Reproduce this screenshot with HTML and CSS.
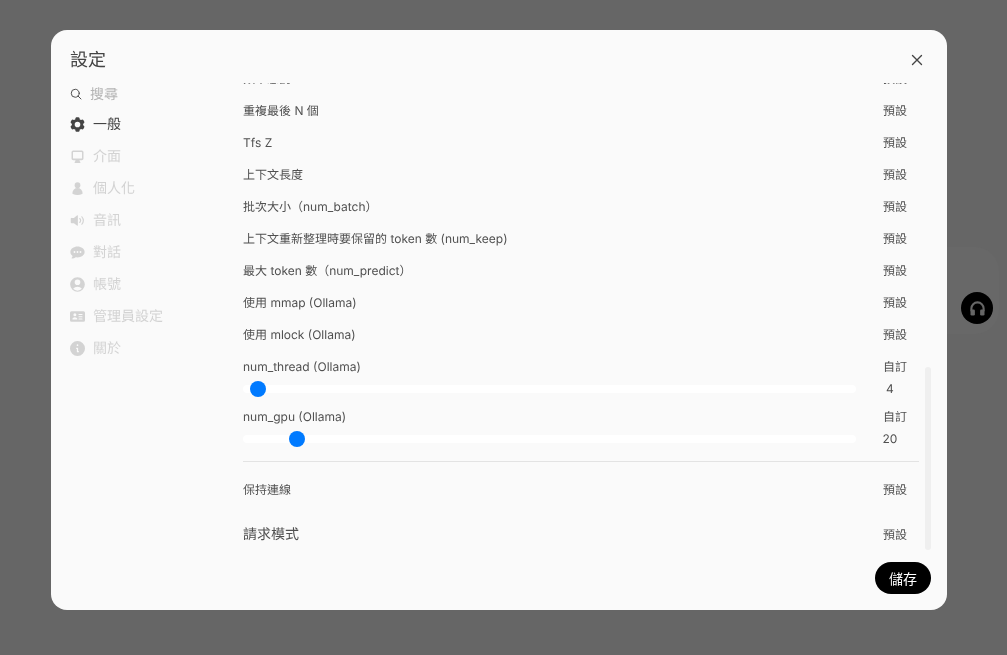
FILE: index.html
```html
<!DOCTYPE html>
<html lang="zh-TW">
<head>
  <meta charset="UTF-8">
  <title>設定</title>
  <meta name="viewport" content="width=device-width, initial-scale=1.0">
  <link rel="stylesheet" href="styles.css">
</head>
<body>
  <div class="overlay">
    <div class="modal">
      <div class="modal-header">
        <h2>設定</h2>
        <button class="close-button" aria-label="關閉">
          <svg viewBox="0 0 24 24" fill="none" stroke="currentColor" stroke-width="1.800" stroke-linecap="round"><path d="M6 18 18 6M6 6l12 12"/></svg>
        </button>
      </div>

      <div class="modal-body">
        <!-- Sidebar -->
        <nav class="sidebar">
          <div class="search-row">
            <svg class="icon" viewBox="0 0 24 24" fill="none" stroke="currentColor" stroke-width="2" stroke-linecap="round"><circle cx="10.500" cy="10.500" r="8"/><path d="m22 22-5.800-5.800"/></svg>
            <span>搜尋</span>
          </div>
          <div class="nav-item active">
            <svg class="icon" viewBox="2 2 20 20" fill="currentColor"><path fill-rule="evenodd" d="M11.078 2.25c-.917 0-1.699.663-1.85 1.567L9.05 4.889c-.02.12-.115.26-.297.348a7.493 7.493 0 0 0-.986.57c-.166.115-.334.126-.45.083L6.3 5.508a1.875 1.875 0 0 0-2.282.819l-.922 1.597a1.875 1.875 0 0 0 .432 2.385l.84.692c.095.078.17.229.154.43a7.598 7.598 0 0 0 0 1.139c.015.2-.059.352-.153.43l-.841.692a1.875 1.875 0 0 0-.432 2.385l.922 1.597a1.875 1.875 0 0 0 2.282.818l1.019-.382c.115-.043.283-.031.45.082.312.214.641.405.985.57.182.088.277.228.297.35l.178 1.071c.151.904.933 1.567 1.85 1.567h1.844c.916 0 1.699-.663 1.85-1.567l.178-1.072c.02-.12.114-.26.297-.349.344-.165.673-.356.985-.57.167-.114.335-.125.45-.082l1.02.382a1.875 1.875 0 0 0 2.28-.819l.923-1.597a1.875 1.875 0 0 0-.432-2.385l-.84-.692c-.095-.078-.17-.229-.154-.43a7.614 7.614 0 0 0 0-1.139c-.016-.2.059-.352.153-.43l.84-.692c.708-.582.891-1.59.433-2.385l-.922-1.597a1.875 1.875 0 0 0-2.282-.818l-1.02.382c-.114.043-.282.031-.449-.083a7.49 7.49 0 0 0-.985-.57c-.183-.087-.277-.227-.297-.348l-.179-1.072a1.875 1.875 0 0 0-1.85-1.567h-1.843ZM12 15.75a3.75 3.75 0 1 0 0-7.5 3.75 3.75 0 0 0 0 7.5Z"/></svg>
            <span>一般</span>
          </div>
          <div class="nav-item">
            <svg class="icon" viewBox="0 0 20 20" fill="currentColor"><path fill-rule="evenodd" d="M2 4.250A2.250 2.250 0 0 1 4.250 2h11.500A2.250 2.250 0 0 1 18 4.250v8.500A2.250 2.250 0 0 1 15.750 15h-3.100l.350 1.400.800.800a.750.750 0 0 1-.550 1.300H6.750a.750.750 0 0 1-.550-1.300l.800-.800.350-1.400h-3.100A2.250 2.250 0 0 1 2 12.750v-8.500Zm2 0v7.750c0 .410.340.750.750.750h10.500a.750.750 0 0 0 .750-.750V4.750a.750.750 0 0 0-.750-.750H4.750a.750.750 0 0 0-.750.250Z"/></svg>
            <span>介面</span>
          </div>
          <div class="nav-item">
            <svg class="icon" viewBox="0 0 20 20" fill="currentColor"><circle cx="10" cy="5.500" r="3.800"/><path d="M3.200 16.200a6.800 6.800 0 0 1 13.600 0c0 .500-.300.900-.700 1.100A13.600 13.600 0 0 1 10 18.600a13.600 13.600 0 0 1-6.100-1.300c-.400-.200-.700-.600-.700-1.100Z"/></svg>
            <span>個人化</span>
          </div>
          <div class="nav-item">
            <svg class="icon" viewBox="0 0 20 20" fill="currentColor"><path d="M10.500 3.750a.750.750 0 0 0-1.260-.550L5.200 6.500H2a1 1 0 0 0-1 .690V12.810a1 1 0 0 0 1 .690h3.200l4.040 3.300a.750.750 0 0 0 1.260-.550V3.750Z"/><path d="M13 7.300a4 4 0 0 1 0 5.400" fill="none" stroke="currentColor" stroke-width="1.500" stroke-linecap="round"/><path d="M15.800 5a8 8 0 0 1 0 10" fill="none" stroke="currentColor" stroke-width="1.500" stroke-linecap="round"/></svg>
            <span>音訊</span>
          </div>
          <div class="nav-item">
            <svg class="icon" viewBox="0 0 20 20" fill="currentColor"><path fill-rule="evenodd" d="M10 2c-4.800 0-9.500 3.100-9.500 7.300 0 2.100 1 3.900 2.900 5.200-.100 1-.500 1.900-1.100 2.600a.600.600 0 0 0 .500 1c1.900-.100 3.500-.700 4.800-1.700.700.100 1.600.200 2.400.200 4.800 0 9.500-3.100 9.500-7.300S14.800 2 10 2ZM6 10.500a1.200 1.200 0 1 0 0-2.400 1.200 1.200 0 0 0 0 2.400Zm4 0a1.200 1.200 0 1 0 0-2.400 1.200 1.200 0 0 0 0 2.400Zm4 0a1.200 1.200 0 1 0 0-2.400 1.200 1.200 0 0 0 0 2.400Z"/></svg>
            <span>對話</span>
          </div>
          <div class="nav-item">
            <svg class="icon" viewBox="2 2 20 20" fill="currentColor"><path fill-rule="evenodd" d="M18.685 19.097A9.723 9.723 0 0 0 21.750 12c0-5.385-4.365-9.750-9.750-9.750S2.250 6.615 2.250 12a9.723 9.723 0 0 0 3.065 7.097A9.716 9.716 0 0 0 12 21.750a9.716 9.716 0 0 0 6.685-2.653Zm-12.540-1.285A7.486 7.486 0 0 1 12 15a7.486 7.486 0 0 1 5.855 2.812A8.224 8.224 0 0 1 12 20.250a8.224 8.224 0 0 1-5.855-2.438ZM15.750 9a3.750 3.750 0 1 1-7.500 0 3.750 3.750 0 0 1 7.500 0Z"/></svg>
            <span>帳號</span>
          </div>
          <div class="nav-item">
            <svg class="icon" viewBox="0 0 20 20" fill="currentColor"><path fill-rule="evenodd" d="M0 5a2 2 0 0 1 2-2h16a2 2 0 0 1 2 2v10a2 2 0 0 1-2 2H2a2 2 0 0 1-2-2V5Zm8.500 2.500a2 2 0 1 1-4 0 2 2 0 0 1 4 0Zm-2 3.500c-1.700 0-3 1-3.300 2.500-.100.300.200.500.400.500h5.800c.200 0 .500-.200.400-.500C9.500 12 8.200 11 6.500 11Zm5.500-4.500a.750.750 0 0 0 0 1.500h4a.750.750 0 0 0 0-1.500h-4Zm0 3a.750.750 0 0 0 0 1.500h4a.750.750 0 0 0 0-1.500h-4Zm0 3a.750.750 0 0 0 0 1.500h4a.750.750 0 0 0 0-1.500h-4Z"/></svg>
            <span>管理員設定</span>
          </div>
          <div class="nav-item">
            <svg class="icon" viewBox="1 1 18 18" fill="currentColor"><path fill-rule="evenodd" d="M19 10a9 9 0 1 1-18 0 9 9 0 0 1 18 0Zm-8-4a1 1 0 1 1-2 0 1 1 0 0 1 2 0ZM9 9a.750.750 0 0 0 0 1.500h.250v3.250a.750.750 0 0 0 .750.750h1a.750.750 0 0 0 0-1.500h-.250V9.750A.750.750 0 0 0 10 9H9Z"/></svg>
            <span>關於</span>
          </div>
        </nav>

        <!-- Settings list -->
        <div class="settings">
          <div class="settings-list">
            <div class="row"><span>頻率懲罰</span><span>預設</span></div>
            <div class="row"><span>重複最後 N 個</span><span>預設</span></div>
            <div class="row"><span>Tfs Z</span><span>預設</span></div>
            <div class="row"><span>上下文長度</span><span>預設</span></div>
            <div class="row"><span>批次大小（num_batch）</span><span>預設</span></div>
            <div class="row"><span>上下文重新整理時要保留的 token 數 (num_keep)</span><span>預設</span></div>
            <div class="row"><span>最大 token 數（num_predict）</span><span>預設</span></div>
            <div class="row"><span>使用 mmap (Ollama)</span><span>預設</span></div>
            <div class="row"><span>使用 mlock (Ollama)</span><span>預設</span></div>

            <div class="slider-block first">
              <div class="slider-label"><span>num_thread (Ollama)</span><span>自訂</span></div>
              <div class="slider-row">
                <input type="range" min="1.1" max="248" step="0.1" value="4">
                <span class="slider-value">4</span>
              </div>
            </div>
            <div class="slider-block">
              <div class="slider-label"><span>num_gpu (Ollama)</span><span>自訂</span></div>
              <div class="slider-row">
                <input type="range" min="1.1" max="248" step="0.1" value="20">
                <span class="slider-value">20</span>
              </div>
            </div>

            <hr>

            <div class="row"><span>保持連線</span><span>預設</span></div>
            <div class="row request-mode"><span class="big-label">請求模式</span><span>預設</span></div>
          </div>
        </div>
      </div>

      <div class="scroll-thumb"></div>

      <div class="modal-footer">
        <button class="save-button">儲存</button>
      </div>
    </div>

    <div class="float-panel"></div>
    <button class="float-button" aria-label="語音">
      <svg viewBox="0 0 24 24" fill="none"><path d="M5 15v-3a7 7 0 0 1 14 0v3" stroke="currentColor" stroke-width="2.400"/><rect x="4" y="13" width="5" height="7" rx="1.500" fill="currentColor"/><rect x="15" y="13" width="5" height="7" rx="1.500" fill="currentColor"/></svg>
    </button>
  </div>
</body>
</html>
```

FILE: styles.css
```css
* {
  box-sizing: border-box;
}

body {
  font-family: Inter, 'Noto Sans CJK TC', sans-serif;
  margin: 0;
  padding: 0;
  overflow: hidden;
  background: #666666;
  text-rendering: geometricPrecision;
}

button {
  font-family: inherit;
  border: none;
  cursor: pointer;
}

.overlay {
  position: relative;
  width: 100%;
  height: 655px;
  padding: 30px 0 45px 51px;
  background: #666666;
}

.modal {
  position: relative;
  z-index: 2;
  display: flex;
  flex-direction: column;
  width: 896px;
  height: 580px;
  background: #fafafa;
  border-radius: 16px;
  color: #505050;
  will-change: transform;
}

.modal-header {
  display: flex;
  align-items: center;
  justify-content: space-between;
  height: 48px;
  padding: 10px 21px 0 19px;
  flex-shrink: 0;
}

.modal-header h2 {
  margin: 0;
  font-size: 18px;
  font-weight: 400;
  color: #444444;
}

.close-button {
  width: 18px;
  height: 18px;
  padding: 0;
  margin-top: 2px;
  background: none;
  color: #444444;
}

.modal-body {
  display: flex;
  height: 472px;
  flex-shrink: 0;
}

/* Sidebar */
.sidebar {
  width: 192px;
  flex-shrink: 0;
  padding: 2px 0 0 19px;
  font-size: 14px;
}

.icon {
  width: 15px;
  height: 15px;
  flex-shrink: 0;
}

.search-row {
  display: flex;
  align-items: center;
  gap: 8px;
  height: 28px;
  color: #b4b4b4;
}

.search-row .icon {
  color: #505050;
  width: 12px;
  height: 12px;
}

.nav-item {
  display: flex;
  align-items: center;
  gap: 8px;
  height: 32px;
  color: #d3d3d3;
}

.nav-item.active {
  color: #444444;
}

/* Settings */
.settings {
  flex: 1;
  margin-top: 5px;
  margin-right: 28px;
  overflow: hidden;
  font-size: 12px;
}

.settings-list {
  margin-top: -21px;
}

.row,
.slider-label {
  display: flex;
  align-items: center;
  justify-content: space-between;
  padding-right: 12px;
}

.row {
  height: 32px;
}

.slider-block {
  padding-top: 5px;
}

.slider-block.first {
  padding-top: 6px;
}

.slider-label {
  height: 21px;
}

.slider-row {
  display: grid;
  grid-template-columns: 1fr 48px;
  column-gap: 10px;
  align-items: center;
  height: 24px;
  padding-right: 5px;
}

.slider-value {
  text-align: center;
  margin-top: -2px;
}

input[type="range"] {
  -webkit-appearance: none;
  appearance: none;
  width: 100%;
  height: 8px;
  margin: 0;
  background: #ffffff;
  border-radius: 4px;
  outline: none;
}

input[type="range"]::-webkit-slider-thumb {
  -webkit-appearance: none;
  width: 16px;
  height: 16px;
  border-radius: 50%;
  background: #007aff;
}

hr {
  height: 1px;
  margin: 10px 0 11px;
  border: none;
  background: #e3e3e3;
}

.request-mode {
  margin-top: 13px;
}

.big-label {
  font-size: 14px;
}

.scroll-thumb {
  position: absolute;
  top: 337px;
  right: 16px;
  width: 6px;
  height: 183px;
  border-radius: 3px;
  background: #efefef;
}

.modal-footer {
  display: flex;
  justify-content: flex-end;
  padding: 12px 16px 16px;
}

.save-button {
  width: 56px;
  height: 32px;
  background: #000000;
  color: #ffffff;
  font-size: 14px;
  border-radius: 16px;
}

/* Floating voice widget */
.float-panel {
  position: absolute;
  top: 247px;
  left: 900px;
  width: 99px;
  height: 87px;
  border-radius: 24px;
  background: #686868;
  z-index: 1;
}

.float-button {
  position: absolute;
  top: 292px;
  left: 961px;
  z-index: 2;
  display: flex;
  align-items: center;
  justify-content: center;
  width: 32px;
  height: 32px;
  padding: 0;
  border-radius: 50%;
  background: #000000;
  color: #666666;
}

.float-button svg {
  width: 21px;
  height: 21px;
}
```
